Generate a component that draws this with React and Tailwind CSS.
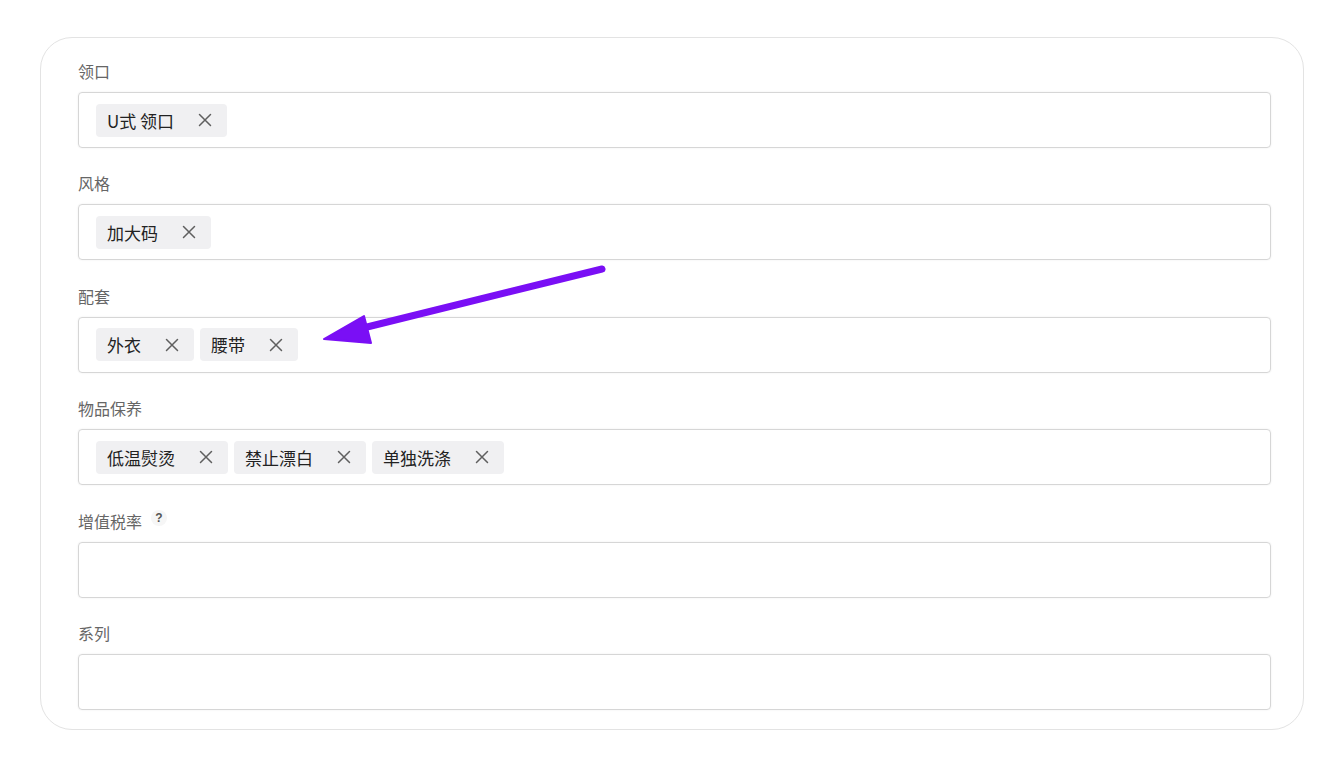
import React from 'react';

const fields = [
  { label: '领口', tags: ['U式 领口'] },
  { label: '风格', tags: ['加大码'] },
  { label: '配套', tags: ['外衣', '腰带'] },
  { label: '物品保养', tags: ['低温熨烫', '禁止漂白', '单独洗涤'] },
  { label: '增值税率', tags: [], help: true },
  { label: '系列', tags: [] },
];

const font = { fontFamily: '"Noto Sans CJK SC", "Liberation Sans", sans-serif' };

function CloseIcon() {
  return (
    <svg width="16" height="16" viewBox="0 0 16 16" className="shrink-0">
      <path d="M2.5 2.5 L13.5 13.5 M13.5 2.5 L2.5 13.5" stroke="#5f5f5f" strokeWidth="1.5" strokeLinecap="round" />
    </svg>
  );
}

function Tag({ text }) {
  return (
    <div className="flex items-center h-[33px] pl-[11px] pr-[14px] rounded-[4px] bg-[#f0f0f2]">
      <span className="text-[17px] leading-none text-[#222]">{text}</span>
      <span className="ml-[23px] flex items-center">
        <CloseIcon />
      </span>
    </div>
  );
}

export default function App() {
  return (
    <div className="w-[1344px] h-[766px] bg-white pt-[37px] pl-[40px]" style={font}>
      <div className="relative w-[1264px] h-[693px] border border-[#e3e3e3] rounded-[32px] pt-[22px] pl-[37px] pr-[32px] flex flex-col gap-[24.4px]">
        {fields.map((f) => (
          <div key={f.label} className="flex flex-col">
            <div className="flex items-center h-[22px] mb-[10px]">
              <span className="text-[16px] text-[#666] leading-none">{f.label}</span>
              {f.help && (
                <span className="ml-[9px] -mt-[6px] w-[16px] h-[16px] rounded-full bg-[#f6f6f6] flex items-center justify-center text-[12px] font-bold text-[#555]" style={{ fontFamily: '"Liberation Sans", sans-serif' }}>
                  ?
                </span>
              )}
            </div>
            <div className="h-[56px] border border-[#d6d6d6] rounded-[4px] shadow-[0_0_2px_rgba(0,0,0,0.08)] flex items-center pl-[17px] gap-[6px]">
              {f.tags.map((t) => (
                <Tag key={t} text={t} />
              ))}
            </div>
          </div>
        ))}

        {/* annotation arrow */}
        <svg className="absolute left-0 top-0 pointer-events-none" width="1264" height="693" viewBox="40 37 1264 693">
          <line x1="601" y1="268" x2="358" y2="328" stroke="#7a0ff5" strokeWidth="7" strokeLinecap="round" />
          <polygon points="323,338 363,315 370,342" fill="#7a0ff5" stroke="#7a0ff5" strokeWidth="2" strokeLinejoin="round" />
        </svg>
      </div>
    </div>
  );
}
